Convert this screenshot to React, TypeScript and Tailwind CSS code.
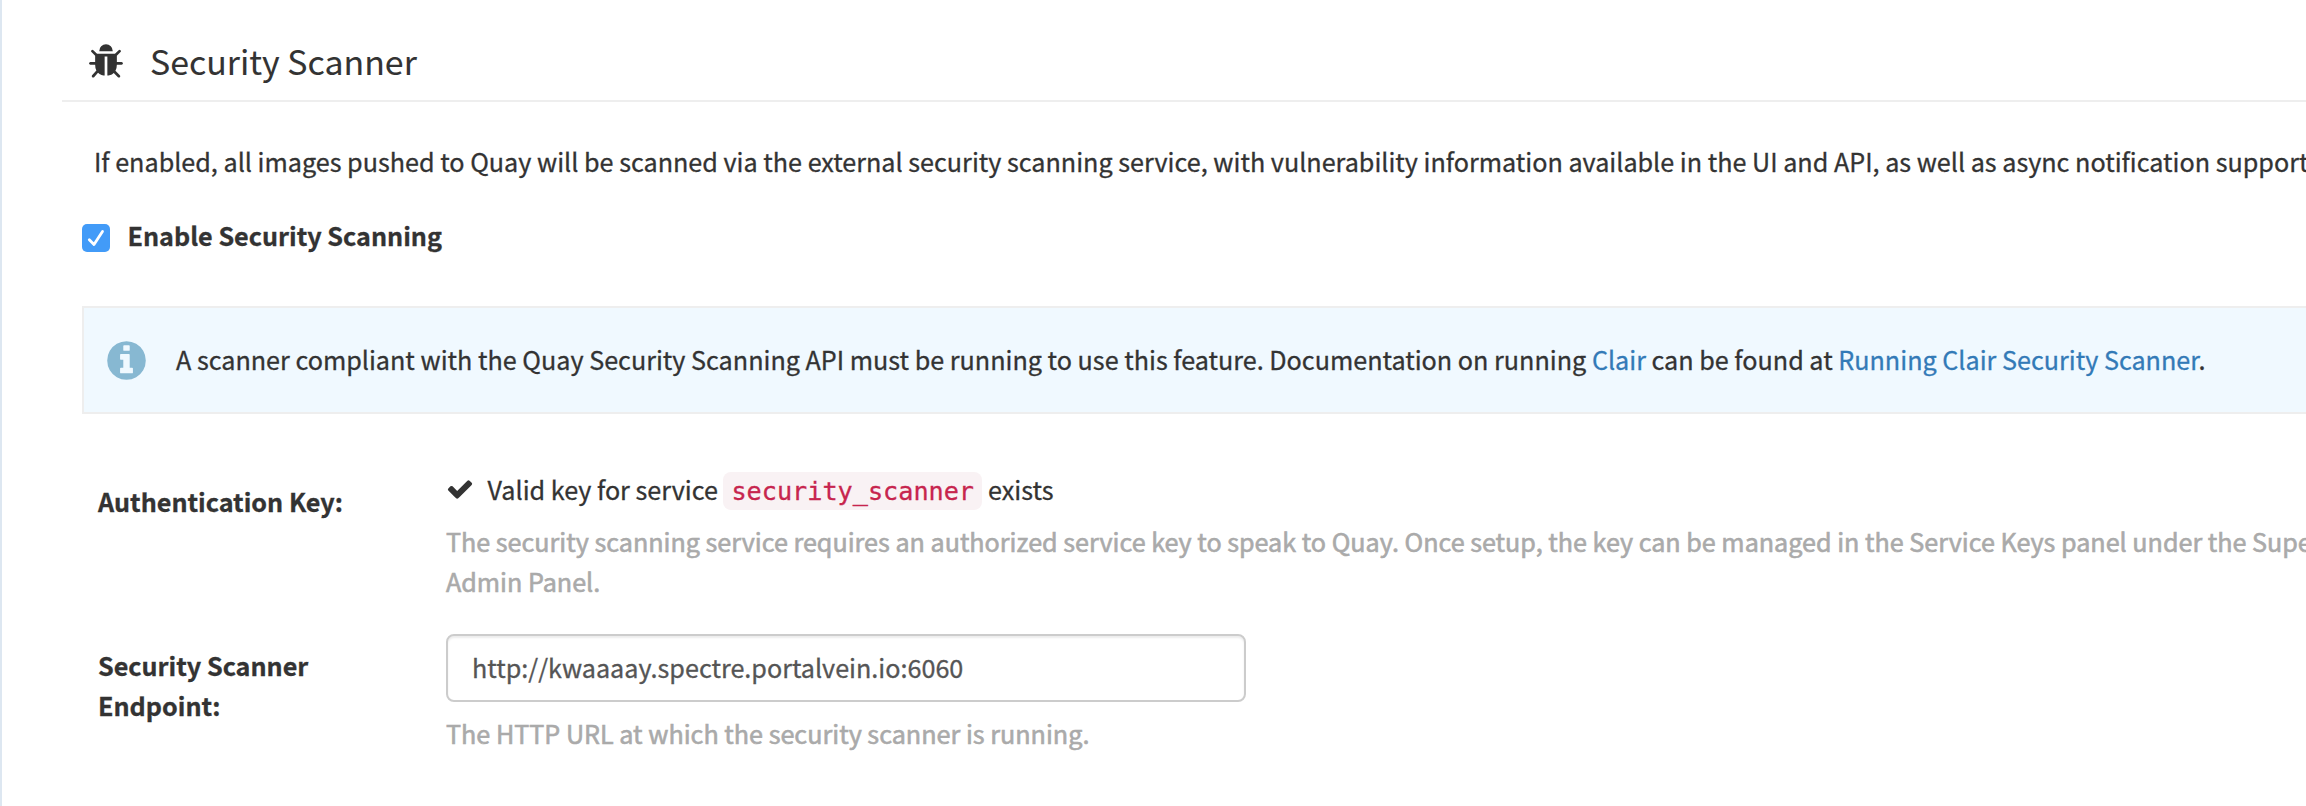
import type { ReactNode } from "react";

const FONT = "font-['Noto_Sans_CJK_SC','Noto_Sans',sans-serif]";

function Icon({ d, className }: { d: string; className: string }) {
  return (
    <svg viewBox="0 0 1792 1792" fill="currentColor" aria-hidden="true" className={className}>
      <path d={d} />
    </svg>
  );
}

const BUG =
  "M1696 960q0 26-19 45t-45 19h-224q0 171-67 290l208 209q19 19 19 45t-19 45q-18 19-45 19t-45-19l-198-197q-5 5-15 13t-42 28.5-65 36.5-82 29-97 13v-896h-128v896q-51 0-101.5-13.5t-87-33-66-39-43.5-32.5l-15-14-183 207q-20 21-48 21-24 0-43-16-19-18-20.5-44.5t15.5-46.5l202-227q-58-114-58-274h-224q-26 0-45-19t-19-45 19-45 45-19h224v-294l-173-173q-19-19-19-45t19-45 45-19 45 19l173 173h844l173-173q19-19 45-19t45 19 19 45-19 45l-173 173v294h224q26 0 45 19t19 45zm-480-576h-640q0-133 93.5-226.5t226.5-93.5 226.5 93.5 93.5 226.5z";
const INFO =
  "M1152 1376v-160q0-14-9-23t-23-9h-96v-512q0-14-9-23t-23-9h-320q-14 0-23 9t-9 23v160q0 14 9 23t23 9h96v320h-96q-14 0-23 9t-9 23v160q0 14 9 23t23 9h448q14 0 23-9t9-23zm-128-896v-160q0-14-9-23t-23-9h-192q-14 0-23 9t-9 23v160q0 14 9 23t23 9h192q14 0 23-9t9-23zm640 416q0 209-103 385.5t-279.5 279.5-385.5 103-385.5-103-279.5-279.5-103-385.5 103-385.5 279.5-279.5 385.5-103 385.5 103 279.5 279.5 103 385.5z";
const CHECK =
  "M1671 566q0 40-28 68l-724 724-136 136q-28 28-68 28t-68-28l-136-136-362-362q-28-28-28-68t28-68l136-136q28-28 68-28t68 28l294 295 656-657q28-28 68-28t68 28l136 136q28 28 28 68z";

function Field({ label, className, children }: { label: ReactNode; className: string; children: ReactNode }) {
  return (
    <div className="flex items-start pl-[98px]">
      <div className={`w-[348px] shrink-0 font-bold ${className}`}>{label}</div>
      <div className="shrink-0">{children}</div>
    </div>
  );
}

export default function App() {
  return (
    <div
      className={`h-[806px] w-full overflow-hidden border-l-2 border-[#dde7f1] bg-white text-[25.17px] leading-[40px] whitespace-nowrap text-[#333] [-webkit-text-stroke:0.3px] ${FONT}`}
    >
      <div className="-ml-0.5">
        <header className="ml-[62px] flex h-[102px] items-start border-b-2 border-[#eee] pt-[42px] pl-[25px]">
          <Icon d={BUG} className="mt-px size-[38px] shrink-0" />
          <h2 className="-mt-px ml-[25px] text-[33.9px] leading-[40px] [-webkit-text-stroke:0.1px]">Security Scanner</h2>
        </header>

        <p className="mt-[39px] ml-[94px]">
          If enabled, all images pushed to Quay will be scanned via the external security scanning service, with
          vulnerability information available in the UI and API, as well as async notification support
        </p>

        <div className="mt-[34px] ml-[82px] flex items-start">
          <span className="mt-[9px] flex size-7 items-center justify-center rounded-[5px] bg-[#429bf8]">
            <svg viewBox="0 0 28 28" fill="none" className="size-7" aria-hidden="true">
              <path d="M7.3 15.7L12 20.5L20.5 7.5" stroke="white" strokeWidth="2.8" strokeLinecap="round" strokeLinejoin="round" />
            </svg>
          </span>
          <span className="ml-[17.5px] font-bold">Enable Security Scanning</span>
        </div>

        <div className="mt-[51px] ml-[82px] flex h-[108px] items-start border-2 border-r-0 border-[#eee] bg-[#f0f9ff] pt-[31px] pl-[21px]">
          <Icon d={INFO} className="-mt-px -ml-px size-[45px] shrink-0 text-[#87b8d2]" />
          <p className="ml-[27px]">
            A scanner compliant with the Quay Security Scanning API must be running to use this feature. Documentation on
            running <a className="text-[#337ab7]">Clair</a> can be found at{" "}
            <a className="text-[#337ab7]">Running Clair Security Scanner</a>.
          </p>
        </div>

        <div className="mt-[55px]">
          <Field label="Authentication Key:" className="pt-3">
            <div className="flex h-10 items-center">
              <Icon d={CHECK} className="mr-[13.5px] size-7 shrink-0" />
              <span>Valid key for service</span>
              <code className="mr-[6px] ml-[5.5px] mt-[4px] h-[38px] rounded-lg bg-[#f9f2f4] px-2 font-['DejaVu_Sans_Mono',monospace] text-[25.2px] leading-[40px] text-[#c7254e]">
                security_scanner
              </code>
              <span>exists</span>
            </div>
            <p className="mt-3 text-[25.13px] text-[#aaa] [-webkit-text-stroke:0.6px]">
              The security scanning service requires an authorized service key to speak to Quay. Once setup, the key can
              be managed in the Service Keys panel under the Super
              <br />
              Admin Panel.
            </p>
          </Field>
        </div>

        <div className="mt-[33px]">
          <Field
            className="pt-[11px]"
            label={
              <>
                Security Scanner
                <br />
                Endpoint:
              </>
            }
          >
            <div className="h-[68px] w-[800px] rounded-lg border-2 border-[#ccc] pt-[11px] pl-6 text-[#555] shadow-[inset_0_2px_2px_rgba(0,0,0,0.075)]">
              http://kwaaaay.spectre.portalvein.io:6060
            </div>
            <p className="mt-[11px] text-[#aaa] [-webkit-text-stroke:0.6px]">The HTTP URL at which the security scanner is running.</p>
          </Field>
        </div>
      </div>
    </div>
  );
}
